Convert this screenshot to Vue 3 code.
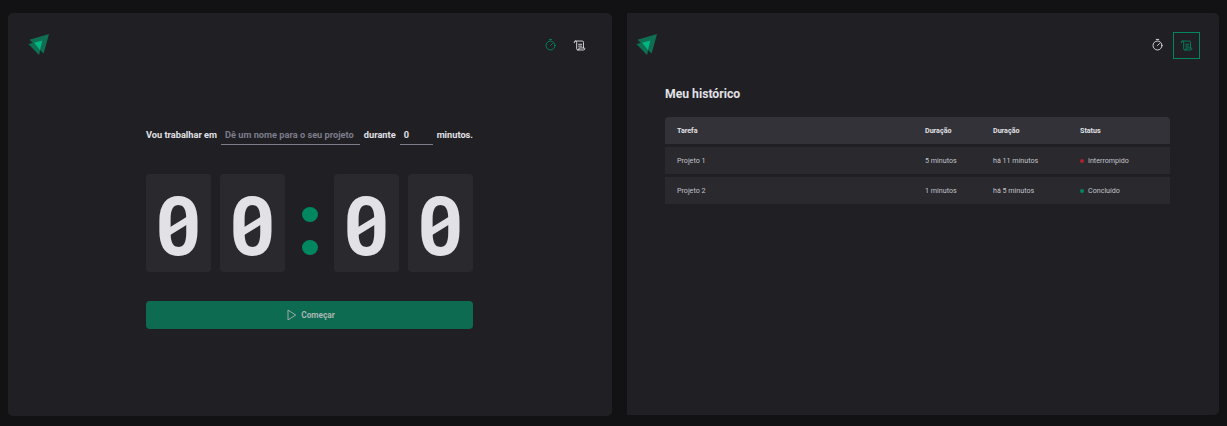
<script setup>
const panels = ['timer', 'history']
const minutes = ['0', '0']
const seconds = ['0', '0']
const tasks = [
  { name: 'Projeto 1', duration: '5 minutos', start: 'há 11 minutos', status: 'Interrompido', tone: 'red' },
  { name: 'Projeto 2', duration: '1 minutos', start: 'há 5 minutos', status: 'Concluído', tone: 'green' },
]
</script>

<template>
  <div class="page">
    <section v-for="panel in panels" :key="panel" class="panel" :class="panel">
      <header class="header">
        <svg class="logo" viewBox="0 0 22 22">
          <path d="M1.5 5.7 21 0 15.6 19.5Z" fill="#0f6f53" />
          <path d="M.3 10 14.5 6.4 11 21Z" fill="#0f6f53" />
          <path d="M6.1 8.7 14.4 6.5 11.9 16Z" fill="#03b681" />
        </svg>
        <nav class="nav">
          <a class="link" :class="{ active: panel === 'timer' }">
            <svg class="icon" viewBox="0 0 256 256">
              <circle cx="128" cy="128" r="88" />
              <path d="M128 128 167.6 88.4M104 8h48" />
            </svg>
          </a>
          <a class="link" :class="{ active: panel === 'history', focused: panel === 'history' }">
            <svg class="icon" viewBox="0 0 256 256">
              <path d="M110 104h60M110 140h60" />
              <path d="M32 80s-8-6-8-16a24 24 0 0 1 48 0v128a24 24 0 0 0 48 0c0-10-8-16-8-16h112s8 6 8 16a24 24 0 0 1-24 24H96" />
              <path d="M206 176V64a24 24 0 0 0-24-24H48" />
            </svg>
          </a>
        </nav>
      </header>

      <main v-if="panel === 'timer'" class="home">
        <div class="form">
          <span class="label-task">Vou trabalhar em</span>
          <span class="field task">Dê um nome para o seu projeto</span>
          <span class="label-for">durante</span>
          <span class="field amount">0</span>
          <span class="label-min">minutos.</span>
        </div>
        <div class="countdown">
          <div v-for="(d, i) in minutes" :key="'m' + i" class="card"><span class="digit">{{ d }}</span></div>
          <div class="separator"><i></i><i></i></div>
          <div v-for="(d, i) in seconds" :key="'s' + i" class="card"><span class="digit">{{ d }}</span></div>
        </div>
        <button class="start">
          <svg class="play" viewBox="0 0 10 12"><path d="M1 1.1 8.7 6 1 10.9Z" /></svg>
          <span>Começar</span>
        </button>
      </main>

      <main v-else class="log">
        <h1>Meu histórico</h1>
        <div class="table">
          <div class="row head">
            <span>Tarefa</span><span>Duração</span><span>Duração</span><span>Status</span>
          </div>
          <div v-for="task in tasks" :key="task.name" class="row">
            <span>{{ task.name }}</span>
            <span>{{ task.duration }}</span>
            <span>{{ task.start }}</span>
            <span class="status"><i :class="task.tone"></i>{{ task.status }}</span>
          </div>
        </div>
      </main>
    </section>
  </div>
</template>

<style>
body {
  background: #121214;
  overflow: hidden;
}
</style>

<style scoped>
* {
  box-sizing: border-box;
}
.page {
  display: flex;
  align-items: flex-start;
  gap: 15.4px;
  height: 426px;
  padding: 13px 0 0 8px;
  background: #121214;
  color: #e1e1e6;
  font-family: Roboto, sans-serif;
}
.panel {
  background: #202024;
}
.timer {
  width: 604px;
  height: 403px;
  border-radius: 5px;
}
.history {
  width: 591.4px;
  height: 402px;
  border-radius: 0 5px 5px 0;
}
.header {
  display: flex;
  justify-content: space-between;
  height: 64px;
  padding: 18.5px 19px 0 20px;
}
.timer .header {
  padding-right: 19.5px;
}
.history .header {
  padding-left: 9px;
}
.logo {
  width: 22px;
  height: 22px;
  margin-top: 2.5px;
}
.nav {
  display: flex;
  gap: 2px;
}
.timer .nav {
  gap: 1.3px;
}
.link {
  display: flex;
  align-items: center;
  justify-content: center;
  width: 27px;
  height: 27px;
  color: #e1e1e6;
}
.active {
  color: #00875f;
}
.focused {
  border: 1px solid #00875f;
}
.icon {
  width: 13px;
  height: 13px;
  overflow: visible;
  fill: none;
  stroke: currentColor;
  stroke-width: 18;
  stroke-linecap: round;
  stroke-linejoin: round;
}
.home {
  width: 327px;
  margin: 48px 0 0 138px;
}
.form {
  display: flex;
  gap: 4px;
  height: 20px;
  font-size: 9.22px;
  font-weight: 700;
  line-height: 19px;
  white-space: nowrap;
}
.label-task {
  width: 71px;
}
.label-for {
  width: 32px;
}
.field {
  border-bottom: 1px solid #7c7c8a;
  padding-left: 4px;
}
.task {
  width: 139.4px;
  color: #7c7c8a;
}
.amount {
  width: 33px;
}
.countdown {
  display: flex;
  gap: 8.3px;
  margin-top: 29px;
}
.card {
  display: flex;
  align-items: center;
  justify-content: center;
  width: 65.3px;
  height: 98px;
  border-radius: 4px;
  background: #29292e;
}
.digit {
  position: relative;
  font-size: 81.5px;
  font-weight: 700;
  line-height: 98px;
  transform: translateY(3.5px) scaleX(0.97);
}
.digit::after {
  content: '';
  position: absolute;
  left: calc(50% - 10px);
  top: 38.5px;
  width: 20px;
  height: 20px;
  background: #e1e1e6;
  clip-path: polygon(0 60%, 100% 0, 100% 40%, 0 100%);
}
.separator {
  display: flex;
  flex-direction: column;
  align-items: center;
  gap: 18px;
  width: 32.5px;
  padding: 33px 0 0 1px;
}
.separator i {
  width: 16px;
  height: 15px;
  border-radius: 50%;
  background: #00875f;
}
.start {
  display: flex;
  align-items: center;
  justify-content: center;
  gap: 4px;
  width: 327px;
  height: 28.5px;
  margin-top: 28.5px;
  padding: 0 0 0 3px;
  border: 0;
  border-radius: 4px;
  background: #0c6b50;
  color: #aab6b4;
  font: 700 8.3px Roboto, sans-serif;
}
.play {
  width: 10px;
  height: 12px;
  fill: none;
  stroke: currentColor;
  stroke-width: 0.9;
  stroke-linejoin: round;
}
.log {
  padding: 0 49px 0 37.6px;
}
h1 {
  margin: 8px 0 0;
  font-size: 12.2px;
  font-weight: 700;
  line-height: 18px;
}
.table {
  display: flex;
  flex-direction: column;
  gap: 2.5px;
  margin-top: 14px;
  border-radius: 4px 4px 0 0;
  overflow: hidden;
}
.row {
  display: grid;
  grid-template-columns: 248px 68px 87px 1fr;
  align-items: center;
  height: 27.4px;
  padding: 0 0 0.6px 12px;
  background: #29292e;
  color: #c4c4cc;
  font-size: 7.15px;
}
.head {
  padding-bottom: 1px;
  background: #323238;
  color: #e1e1e6;
  font-weight: 700;
}
.status {
  display: flex;
  align-items: center;
  gap: 4px;
}
.status i {
  width: 4px;
  height: 4px;
  margin-top: 1px;
  border-radius: 50%;
}
.red {
  background: #ab222e;
}
.green {
  background: #00875f;
}
</style>
